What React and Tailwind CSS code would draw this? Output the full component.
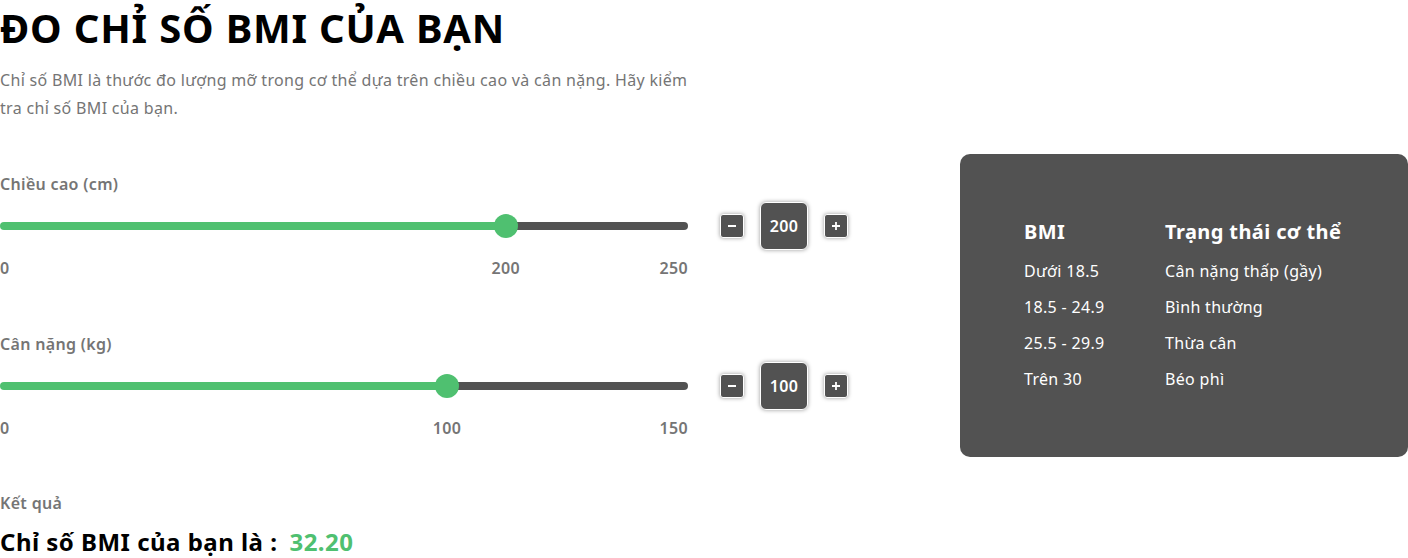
import { useState } from "react";

const statuses = [
  ["Dưới 18.5", "Cân nặng thấp (gầy)"],
  ["18.5 - 24.9", "Bình thường"],
  ["25.5 - 29.9", "Thừa cân"],
  ["Trên 30", "Béo phì"],
];

function StepButton({ label, path, onClick }) {
  return (
    <button
      type="button"
      aria-label={label}
      onClick={onClick}
      className="flex size-6 items-center justify-center rounded-[3px] border border-white bg-[#525252] text-white shadow-[0_0_4px_rgba(0,0,0,0.4)]"
    >
      <svg viewBox="0 0 10 10" className="size-2.5" fill="currentColor" aria-hidden="true">
        <path d={path} />
      </svg>
    </button>
  );
}

function Measure({ id, label, value, min, max, onChange }) {
  const share = (value - min) / (max - min);
  const position = `calc(12px + (100% - 24px) * ${share})`;
  const set = (next) => onChange(Math.min(max, Math.max(min, next)));
  return (
    <div>
      <label htmlFor={id} className="block font-semibold leading-7">
        {label}
      </label>
      <div className="mt-1 flex items-center gap-8">
        <div className="min-w-0 max-w-[688px] flex-1">
          <input
            id={id}
            type="range"
            min={min}
            max={max}
            value={value}
            onChange={(e) => set(Number(e.target.value))}
            style={{ background: `linear-gradient(to right, #4fc070 ${position}, #525252 ${position})` }}
            className="block h-2 w-full cursor-pointer appearance-none rounded-full outline-none [&::-webkit-slider-thumb]:size-6 [&::-webkit-slider-thumb]:appearance-none [&::-webkit-slider-thumb]:rounded-full [&::-webkit-slider-thumb]:bg-[#4fc070]"
          />
        </div>
        <div className="flex items-center gap-4">
          <StepButton label={`Giảm ${label}`} path="M1 4h8v2H1z" onClick={() => set(value - 1)} />
          <output
            htmlFor={id}
            className="flex size-12 items-center justify-center rounded-md border border-white bg-[#525252] font-semibold text-white shadow-[0_0_4px_rgba(0,0,0,0.4)]"
          >
            {value}
          </output>
          <StepButton
            label={`Tăng ${label}`}
            path="M4.1 1h1.8v3.1H9v1.8H5.9V9H4.1V5.9H1V4.1h3.1z"
            onClick={() => set(value + 1)}
          />
        </div>
      </div>
      <div className="relative mt-1 flex max-w-[688px] justify-between font-semibold leading-7">
        <span>0</span>
        <span className="absolute -translate-x-1/2" style={{ left: position }}>
          {value}
        </span>
        <span>{max}</span>
      </div>
    </div>
  );
}

export default function App() {
  const [height, setHeight] = useState(200);
  const [weight, setWeight] = useState(100);
  const bmi = 32.2;

  return (
    <main className="font-['Noto_Sans',sans-serif] tracking-[0.02em] text-[#757575]">
      <h1 className="text-[40px] font-bold leading-14 tracking-[0.02em] text-black">ĐO CHỈ SỐ BMI CỦA BẠN</h1>
      <p className="mt-2.5 max-w-[704px] leading-7">
        Chỉ số BMI là thước đo lượng mỡ trong cơ thể dựa trên chiều cao và cân nặng. Hãy kiểm tra chỉ số BMI của bạn.
      </p>
      <div className="mt-8 flex items-center justify-between gap-8">
        <div className="flex min-w-0 max-w-[848px] flex-1 flex-col gap-12">
          <Measure id="height" label="Chiều cao (cm)" value={height} min={55} max={250} onChange={setHeight} />
          <Measure id="weight" label="Cân nặng (kg)" value={weight} min={5} max={150} onChange={setWeight} />
        </div>
        <section className="w-[448px] rounded-[10px] bg-[#525252] p-16 text-white">
          <table className="w-full text-left leading-7">
            <thead>
              <tr className="text-xl leading-7">
                <th className="w-[141px] pb-[11px] tracking-[0.02em]">BMI</th>
                <th className="pb-[11px] tracking-[0.02em]">Trạng thái cơ thể</th>
              </tr>
            </thead>
            <tbody>
              {statuses.map(([range, status]) => (
                <tr key={range} className="group">
                  <td className="pb-2 group-last:pb-0">{range}</td>
                  <td className="pb-2 group-last:pb-0">{status}</td>
                </tr>
              ))}
            </tbody>
          </table>
        </section>
      </div>
      <section className="mt-8">
        <h2 className="font-semibold leading-7">Kết quả</h2>
        <p className="mt-[11px] flex gap-3 text-2xl font-bold leading-7 tracking-[0.02em] text-black">
          <span>Chỉ số BMI của bạn là :</span>
          <output className="text-[#4fc070]">{bmi.toFixed(2)}</output>
        </p>
      </section>
    </main>
  );
}
